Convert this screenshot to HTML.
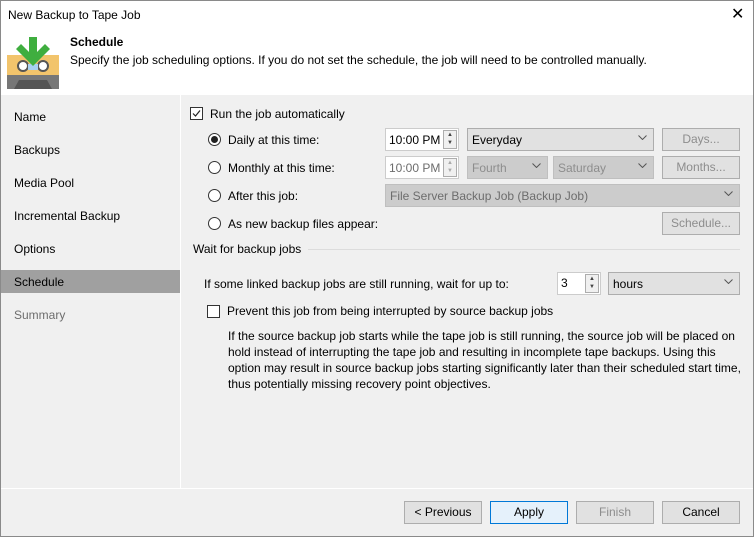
<!DOCTYPE html>
<html><head><style>
*{box-sizing:border-box;margin:0;padding:0}
body{width:754px;height:537px;overflow:hidden;font-family:"Liberation Sans",sans-serif;font-size:12px;color:#000;background:#f0f0f0;position:relative}
.a{position:absolute;white-space:nowrap}
.win{position:absolute;left:0;top:0;width:754px;height:537px;border:1px solid #8a8a8a}
.box{position:absolute;border:1px solid #adadad;background:#e1e1e1}
.dis{background:#cccccc;border-color:#bfbfbf;color:#8d8d8d}
.rad{position:absolute;width:13px;height:13px;border:1px solid #333;border-radius:50%;background:#fff}
.chk{position:absolute;width:13px;height:13px;border:1px solid #333;background:#fff}
.spin{position:absolute;width:14px;border:1px solid #adadad;background:#f0f0f0;font-size:6px;line-height:8px;text-align:center;color:#444}
.btn{position:absolute;height:23px;border:1px solid #adadad;background:#e1e1e1;text-align:center;line-height:21px}
.dd{position:absolute;right:6px;top:6px}
</style></head><body>
<div class="a" style="left:0;top:0;width:754px;height:95px;background:#fff"></div>
<div class="a" style="left:8px;top:8px">New Backup to Tape Job</div>
<div class="a" style="left:731px;top:4px;font-size:16px">✕</div>
<svg class="a" style="left:7px;top:36px" width="52" height="53" viewBox="0 0 52 53">
<rect x="0" y="19" width="52" height="20" fill="#f2c46c"/>
<rect x="0" y="39" width="52" height="14" fill="#777"/>
<polygon points="7,53 12,44 40,44 45,53" fill="#555"/>
<circle cx="16" cy="30" r="5" fill="#fff" stroke="#555" stroke-width="2"/>
<circle cx="36" cy="30" r="5" fill="#fff" stroke="#555" stroke-width="2"/>
<rect x="21" y="28" width="10" height="6" fill="#a8d0f0"/>
<polygon points="22,1 30,1 30,16 38,8 43,13 26,30 9,13 14,8 22,16" fill="#3fae3f"/>
</svg>
<div class="a" style="left:70px;top:35px;font-weight:bold">Schedule</div>
<div class="a" style="left:70px;top:53px">Specify the job scheduling options. If you do not set the schedule, the job will need to be controlled manually.</div>
<div class="a" style="left:180px;top:95px;width:1px;height:394px;background:#fff"></div>
<div class="a" style="left:0;top:488px;width:754px;height:1px;background:#fff"></div>
<div class="a" style="left:14px;top:110px">Name</div>
<div class="a" style="left:14px;top:143px">Backups</div>
<div class="a" style="left:14px;top:176px">Media Pool</div>
<div class="a" style="left:14px;top:209px">Incremental Backup</div>
<div class="a" style="left:14px;top:242px">Options</div>
<div class="a" style="left:1px;top:270px;width:179px;height:23px;background:#a0a0a0"></div>
<div class="a" style="left:14px;top:275px">Schedule</div>
<div class="a" style="left:14px;top:308px;color:#6d6d6d">Summary</div>

<svg class="a" style="left:190px;top:107px" width="13" height="13"><rect x="0.5" y="0.5" width="12" height="12" fill="#fff" stroke="#333"/><path d="M3 6.5 L5.5 9 L10 3.5" fill="none" stroke="#222" stroke-width="1.2"/></svg>
<div class="a" style="left:210px;top:107px">Run the job automatically</div>
<div class="rad" style="left:208px;top:133px"><div style="position:absolute;left:2px;top:2px;width:7px;height:7px;border-radius:50%;background:#222"></div></div>
<div class="a" style="left:228px;top:133px">Daily at this time:</div>
<div class="rad" style="left:208px;top:161px"></div>
<div class="a" style="left:228px;top:161px">Monthly at this time:</div>
<div class="rad" style="left:208px;top:189px"></div>
<div class="a" style="left:228px;top:189px">After this job:</div>
<div class="rad" style="left:208px;top:217px"></div>
<div class="a" style="left:228px;top:217px">As new backup files appear:</div>

<svg width="0" height="0" style="position:absolute"><defs><symbol id="dv" viewBox="0 0 9 5"><path d="M0.5 0.5 L4.5 4.5 L8.5 0.5" fill="none" stroke="#555"/></symbol></defs></svg>

<div class="box" style="left:385px;top:128px;width:74px;height:23px;background:#fff;border-color:#ccc;padding:4px 3px">10:00 PM</div>
<div class="spin" style="left:443px;top:130px;height:19px">▲<br>▼</div>
<div class="box" style="left:467px;top:128px;width:187px;height:23px;padding:4px 4px">Everyday<svg class="dd" width="9" height="5"><use href="#dv"/></svg></div>
<div class="btn dis" style="left:662px;top:128px;width:78px">Days...</div>

<div class="box" style="left:385px;top:156px;width:74px;height:23px;background:#fff;border-color:#ccc;padding:4px 3px;color:#6d6d6d">10:00 PM</div>
<div class="spin" style="left:443px;top:158px;height:19px;color:#aaa">▲<br>▼</div>
<div class="box dis" style="left:467px;top:156px;width:81px;height:23px;padding:4px 4px">Fourth<svg class="dd" width="9" height="5"><use href="#dv"/></svg></div>
<div class="box dis" style="left:553px;top:156px;width:101px;height:23px;padding:4px 4px">Saturday<svg class="dd" width="9" height="5"><use href="#dv"/></svg></div>
<div class="btn dis" style="left:662px;top:156px;width:78px">Months...</div>

<div class="box dis" style="left:385px;top:184px;width:355px;height:23px;padding:4px 4px;color:#6d6d6d">File Server Backup Job (Backup Job)<svg class="dd" width="9" height="5"><use href="#dv"/></svg></div>
<div class="btn dis" style="left:662px;top:212px;width:78px">Schedule...</div>

<div class="a" style="left:193px;top:242px">Wait for backup jobs</div>
<div class="a" style="left:308px;top:249px;width:432px;height:1px;background:#dcdcdc"></div>
<div class="a" style="left:204px;top:277px">If some linked backup jobs are still running, wait for up to:</div>
<div class="box" style="left:557px;top:272px;width:44px;height:23px;background:#fff;border-color:#ccc;padding:3px 3px">3</div>
<div class="spin" style="left:585px;top:274px;height:19px">▲<br>▼</div>
<div class="box" style="left:608px;top:272px;width:132px;height:23px;padding:4px 4px">hours<svg class="dd" width="9" height="5"><use href="#dv"/></svg></div>

<div class="chk" style="left:207px;top:305px"></div>
<div class="a" style="left:227px;top:304px">Prevent this job from being interrupted by source backup jobs</div>
<div class="a" style="left:228px;top:328px;line-height:16px;white-space:normal;width:515px">If the source backup job starts while the tape job is still running, the source job will be placed on hold instead of interrupting the tape job and resulting in incomplete tape backups. Using this option may result in source backup jobs starting significantly later than their scheduled start time, thus potentially missing recovery point objectives.</div>

<div class="btn" style="left:404px;top:501px;width:78px">&lt; Previous</div>
<div class="btn" style="left:490px;top:501px;width:78px;border-color:#0078d7;background:#e5f1fb">Apply</div>
<div class="btn dis" style="left:576px;top:501px;width:78px">Finish</div>
<div class="btn" style="left:662px;top:501px;width:78px">Cancel</div>
<div class="win"></div>
</body></html>
